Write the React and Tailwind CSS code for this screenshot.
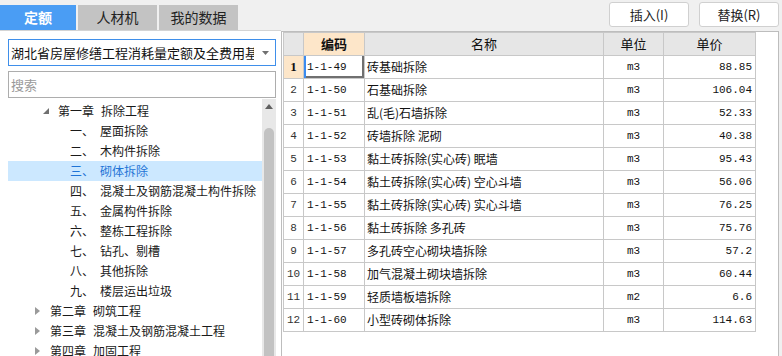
import React from 'react'

const rows = [
  ['1-1-49', '砖基础拆除', 'm3', '88.85'],
  ['1-1-50', '石基础拆除', 'm3', '106.04'],
  ['1-1-51', '乱(毛)石墙拆除', 'm3', '52.33'],
  ['1-1-52', '砖墙拆除 泥砌', 'm3', '40.38'],
  ['1-1-53', '黏土砖拆除(实心砖) 眠墙', 'm3', '95.43'],
  ['1-1-54', '黏土砖拆除(实心砖) 空心斗墙', 'm3', '56.06'],
  ['1-1-55', '黏土砖拆除(实心砖) 实心斗墙', 'm3', '76.25'],
  ['1-1-56', '黏土砖拆除 多孔砖', 'm3', '75.76'],
  ['1-1-57', '多孔砖空心砌块墙拆除', 'm3', '57.2'],
  ['1-1-58', '加气混凝土砌块墙拆除', 'm3', '60.44'],
  ['1-1-59', '轻质墙板墙拆除', 'm2', '6.6'],
  ['1-1-60', '小型砖砌体拆除', 'm3', '114.63'],
]

const sections = [
  ['一、', '屋面拆除'],
  ['二、', '木构件拆除'],
  ['三、', '砌体拆除'],
  ['四、', '混凝土及钢筋混凝土构件拆除'],
  ['五、', '金属构件拆除'],
  ['六、', '整栋工程拆除'],
  ['七、', '钻孔、剔槽'],
  ['八、', '其他拆除'],
  ['九、', '楼层运出垃圾'],
]

const chapters = [
  ['第二章', '砌筑工程'],
  ['第三章', '混凝土及钢筋混凝土工程'],
  ['第四章', '加固工程'],
]

const mono = "font-['Liberation_Mono','DejaVu_Sans_Mono',monospace]"

function Tree() {
  return (
    <div className="flex-1 overflow-hidden text-[12px] text-[#1a1a1a] pt-[2px]">
      <div className="h-[20px] flex items-center">
        <span className="w-[50px] flex justify-end pr-[9px]">
          <svg width="6" height="6" viewBox="0 0 6 6"><path d="M6 0V6H0Z" fill="#707070" /></svg>
        </span>
        <span>第一章</span>
        <span className="ml-[7px]">拆除工程</span>
      </div>
      {sections.map(([n, t], i) => (
        <div key={i} className={`h-[20px] flex items-center ${i === 2 ? 'bg-[#cce8ff] text-[#1f74d6]' : ''}`}>
          <span className="w-[62px] pl-[62px]"></span>
          <span className="w-[30px]">{n}</span>
          <span>{t}</span>
        </div>
      ))}
      {chapters.map(([c, t], i) => (
        <div key={i} className="h-[20px] flex items-center">
          <span className="w-[42px] flex justify-end pr-[10px] pl-[26px]">
            <svg width="5" height="8" viewBox="0 0 5 8"><path d="M0 0L5 4L0 8Z" fill="#9a9a9a" /></svg>
          </span>
          <span>{c}</span>
          <span className="ml-[7px]">{t}</span>
        </div>
      ))}
    </div>
  )
}

function Left() {
  return (
    <div className="w-[281px] flex flex-col">
      <div className="h-[31px] flex items-end gap-[2px] border-b border-[#d4d4d4] text-[14px]">
        <div className="w-[76px] h-[25px] bg-[#4a9df4] text-white font-bold flex items-center justify-center">定额</div>
        <div className="w-[79px] h-[25px] bg-[#c3c3c3] text-[#222] flex items-center justify-center">人材机</div>
        <div className="w-[79px] h-[25px] bg-[#c3c3c3] text-[#222] flex items-center justify-center">我的数据</div>
      </div>
      <div className="flex-1 bg-white pl-[8px] pr-[5px] pt-[8px] flex flex-col min-h-0">
        <div className="h-[27px] border border-[#3f8fea] flex items-center pl-[2px] pr-[6px] text-[13px] text-[#111]">
          <span className="flex-1 overflow-hidden whitespace-nowrap">湖北省房屋修缮工程消耗量定额及全费用基价表</span>
          <svg width="7" height="4" viewBox="0 0 7 4" className="ml-[8px]"><path d="M0 0H7L3.5 4Z" fill="#707070" /></svg>
        </div>
        <div className="mt-[5px] h-[27px] border border-[#adadad] flex items-center pl-[2px] text-[13px] text-[#9a9a9a]">搜索</div>
        <div className="flex flex-1 min-h-0 mt-[1px] -ml-[8px]">
          <div className="flex-1 pl-[8px] overflow-hidden"><Tree /></div>
          <div className="w-[14px] bg-[#e8e8e8] flex flex-col items-center pt-[5px]">
            <svg width="8" height="5" viewBox="0 0 8 5"><path d="M0 5L4 0L8 5Z" fill="#606060" /></svg>
            <div className="mt-[19px] w-[10px] flex-1 bg-[#c2c2c2] rounded-t-[5px]"></div>
          </div>
        </div>
      </div>
    </div>
  )
}

function Grid() {
  const cell = 'border border-[#c8c8c8] h-[23px] p-0'
  return (
    <table className="border-collapse table-fixed w-[472px] text-[12px] text-[#111]">
      <colgroup>
        <col className="w-[20px]" />
        <col className="w-[61px]" />
        <col className="w-[239px]" />
        <col className="w-[60px]" />
        <col className="w-[92px]" />
      </colgroup>
      <thead>
        <tr className="bg-[#e6e6e6] text-[13px]">
          <th className={cell}></th>
          <th className={`${cell} bg-[#fde6c9] font-bold`}>编码</th>
          <th className={`${cell} font-normal`}>名称</th>
          <th className={`${cell} font-normal`}>单位</th>
          <th className={`${cell} font-normal`}>单价</th>
        </tr>
      </thead>
      <tbody>
        {rows.map((r, i) => (
          <tr key={i}>
            <td className={`${cell} text-center ${i === 0 ? "bg-[#fde6c9] font-bold font-['Liberation_Serif',serif] text-[13px]" : `${mono} text-[11px] text-[#333]`}`}>{i + 1}</td>
            <td className={`${cell} ${mono} text-[11px] pl-[3px] ${i === 0 ? 'shadow-[inset_2px_0_0_#3b8cf0,inset_-2px_-2px_0_#707070]' : ''}`}>{r[0]}</td>
            <td className={`${cell} pl-[2px] whitespace-nowrap`}>{r[1]}</td>
            <td className={`${cell} ${mono} text-[11px] text-center`}>{r[2]}</td>
            <td className={`${cell} ${mono} text-[11px] text-right pr-[3px]`}>{r[3]}</td>
          </tr>
        ))}
      </tbody>
    </table>
  )
}

function Right() {
  return (
    <div className="flex-1 flex flex-col min-w-0">
      <div className="h-[31px] flex justify-end items-start gap-[10px] pt-[2px] pr-[3px] text-[13px] text-[#222]">
        <button className="w-[80px] h-[25px] bg-white border border-[#d0d0d0] rounded-[3px]">插入(I)</button>
        <button className="w-[80px] h-[25px] bg-white border border-[#d0d0d0] rounded-[3px]">替换(R)</button>
      </div>
      <div className="flex-1 bg-white border-l border-t border-r border-[#bdbdbd] mr-[3px] pl-[1px]">
        <Grid />
      </div>
    </div>
  )
}

export default function App() {
  return (
    <div className="w-[782px] h-[356px] overflow-hidden flex bg-[#f0f0f0] font-['Noto_Sans_CJK_SC','Noto_Sans',sans-serif]">
      <Left />
      <Right />
    </div>
  )
}
